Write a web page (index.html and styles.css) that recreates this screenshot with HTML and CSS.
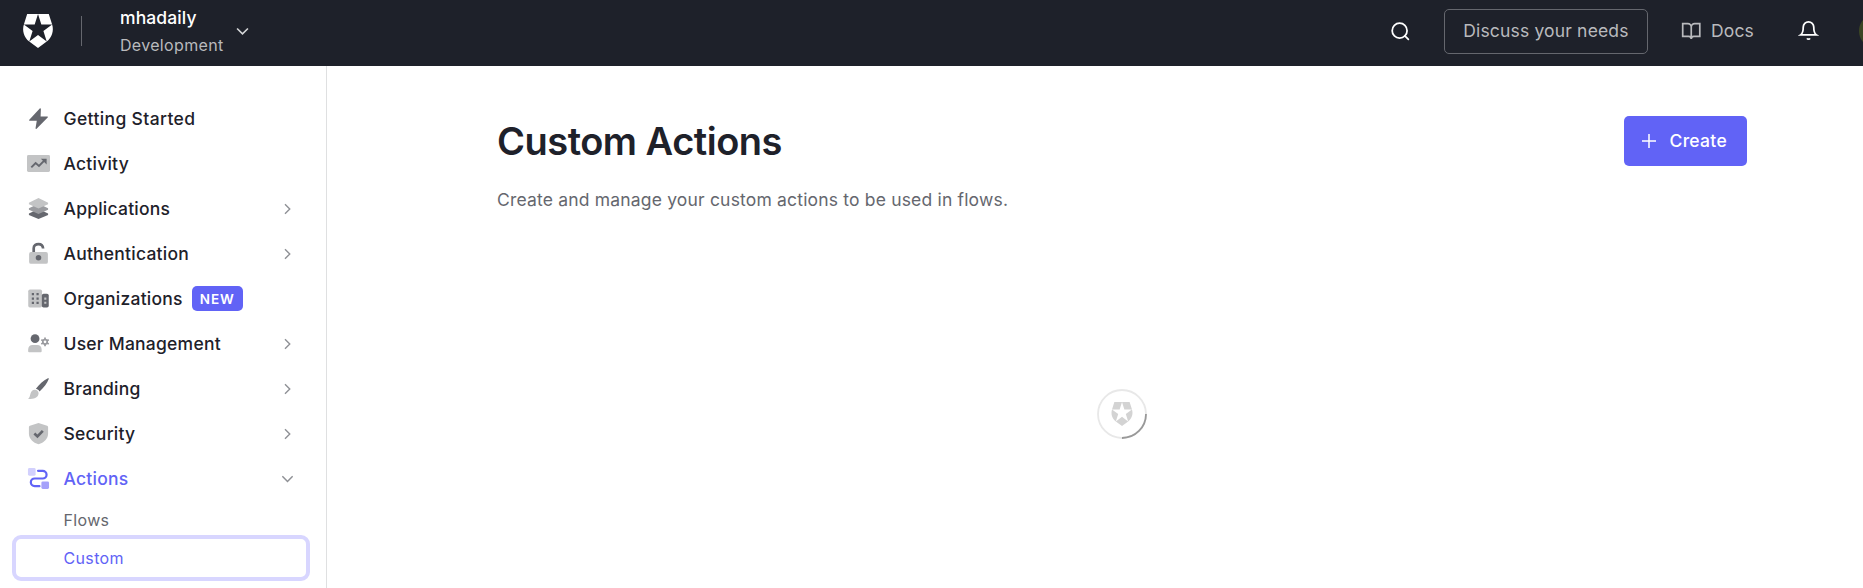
FILE: index.html
```
<!DOCTYPE html>
<html lang="en">
<head>
<meta charset="utf-8">
<title>Custom Actions</title>
<link rel="stylesheet" href="styles.css">
</head>
<body>
<svg class="defs" width="0" height="0" aria-hidden="true">
  <symbol id="shield" viewBox="0 0 24 24"><path d="M21.98 7.448L19.62 0H4.347L2.02 7.448c-1.352 4.312.03 9.206 3.815 12.015L12.007 24l6.157-4.552c3.755-2.81 5.182-7.688 3.815-12.015l-6.16 4.58 2.343 7.45-6.157-4.597-6.158 4.58 2.358-7.433-6.188-4.55 7.63-.045L12.008 0l2.356 7.404 7.615.044z"/></symbol>
  <symbol id="chevron" viewBox="0 0 24 24"><path d="M8 2.500l9.500 9.500L8 21.500"/></symbol>
</svg>
<header class="topbar">
  <svg class="logo"><use href="#shield"/></svg>
  <span class="divider"></span>
  <div class="tenant">
    <div class="tenant-name">mhadaily</div>
    <div class="tenant-env">Development</div>
  </div>
  <svg class="tenant-chevron" viewBox="0 0 12 8"><path d="M1 1.200l5 5 5-5"/></svg>
  <div class="tools">
    <svg class="search" viewBox="0 0 24 24"><circle cx="11" cy="11" r="8.500"/><path d="M21 21l-4-4"/></svg>
    <a class="discuss">Discuss your needs</a>
    <a class="docs"><svg viewBox="0 0 24 24"><path d="M2 3h6a4 4 0 0 1 4 4v14a3 3 0 0 0-3-3H2zM22 3h-6a4 4 0 0 0-4 4v14a3 3 0 0 1 3-3h7z"/></svg><span>Docs</span></a>
    <svg class="bell" viewBox="0 0 24 24"><path d="M18 8A6 6 0 0 0 6 8c0 7-3 9-3 9h18s-3-2-3-9"/><path d="M13.730 21a2 2 0 0 1-3.460 0"/></svg>
    <span class="avatar"></span>
  </div>
</header>
<div class="layout">
  <nav class="sidebar">
    <a class="item"><svg class="icon" viewBox="0 0 24 24"><path class="dark" d="M13.300 1.500L2.400 13.300c-.4.500-.1 1.100.5 1.100h7.300l-1.300 7.800c-.1.700.7 1 1.100.6L21.600 11c.4-.5.1-1.100-.5-1.100h-6.900l.3-7.800c0-.8-.8-1.100-1.200-.6z"/></svg><span>Getting Started</span></a>
    <a class="item"><svg class="icon" viewBox="0 0 24 24"><rect class="light" x="0" y="3.200" width="24" height="17.600" rx="1.500"/><path class="dark-line" d="M4.500 16l4.500-4.500 3.500 3 5.500-5.500"/><path class="dark" d="M14.500 7h6v6z"/></svg><span>Activity</span></a>
    <a class="item"><svg class="icon" viewBox="0 0 24 24"><path class="dark" d="M12 12.500l10 4.700v1.600L12 23 2 18.800v-1.600z"/><path class="mid" d="M12 7l10 4.700v1.600l-10 4.400-10-4.400v-1.600z"/><path class="light" d="M12 1l10 4.900v1.600L12 12 2 7.500V5.900z"/></svg><span>Applications</span><svg class="chev"><use href="#chevron"/></svg></a>
    <a class="item"><svg class="icon" viewBox="0 0 24 24"><path class="lock-line" d="M7 12V6.500C7 3.500 9.200 2.300 12 2.300s4.600 1.300 4.800 4.500"/><rect class="light" x="2.200" y="10.500" width="19.600" height="12.300" rx="2"/><circle class="dark" cx="12" cy="16.500" r="2.900"/></svg><span>Authentication</span><svg class="chev"><use href="#chevron"/></svg></a>
    <a class="item"><svg class="icon" viewBox="0 0 24 24"><rect class="light" x="1.300" y="2.700" width="14.400" height="18.600" rx="1.800"/><rect class="dark" x="15.500" y="7" width="7.200" height="14.300" rx="1.800"/><path class="dark" d="M5 6.300h2.300v2.300H5zm4.900 0h2.300v2.300H9.900zM5 10.900h2.300v2.300H5zm4.900 0h2.300v2.300H9.900zM5 15.500h2.300v2.300H5zm4.900 0h2.300v2.300H9.900z"/><path class="light" d="M18 11h2.200v2.200H18zm0 4.300h2.200v2.200H18z"/></svg><span>Organizations</span><b class="badge">NEW</b></a>
    <a class="item"><svg class="icon" viewBox="0 0 24 24"><circle class="dark" cx="8.400" cy="7" r="4.600"/><path class="light" d="M1.200 18.500c0-3 1.800-5 4.500-5h5.100c2.700 0 4.500 2 4.500 5v1.500c0 .6-.4 1-1 1H2.200c-.6 0-1-.4-1-1z"/><circle class="gear" cx="18.800" cy="10.300" r="2.300"/><path class="gear-teeth" d="M18.800 5.800v2.200m0 4.600v2.200m-3.900-6.750l1.900 1.100m4 2.300l1.900 1.100m-7.800 0l1.900-1.100m4-2.300l1.900-1.100"/></svg><span>User Management</span><svg class="chev"><use href="#chevron"/></svg></a>
    <a class="item"><svg class="icon" viewBox="0 0 24 24"><path class="dark" d="M9.300 12.200C12.500 8 17 3.500 21.800 1.300c.8-.3 1.200.2.900.9-1.700 4.700-5.300 9.300-9.600 12.900-.7-1.500-2-2.500-3.800-2.900z"/><path class="light" d="M8.300 13.400c2 .1 3.700 1.600 3.800 3.400 0 4.200-4.200 6.900-11 6 1.900-1.500 1.900-3.300 2.600-5.600.7-2.400 2.300-3.900 4.600-3.800z"/></svg><span>Branding</span><svg class="chev"><use href="#chevron"/></svg></a>
    <a class="item"><svg class="icon" viewBox="0 0 24 24"><path class="light" d="M12 1l9 2.900c.6.200 1 .6 1 1.300V12c0 5.500-4.200 9.500-10 11.300C6.200 21.500 2 17.500 2 12V5.200c0-.7.4-1.100 1-1.300z"/><path class="check" d="M7.700 12l3.200 3 5.600-5.700"/></svg><span>Security</span><svg class="chev"><use href="#chevron"/></svg></a>
    <a class="item active"><svg class="icon" viewBox="0 0 24 24"><rect class="tint" x="1" y="1" width="8" height="8" rx="1.500"/><rect class="tint-strong" x="15" y="15" width="8" height="8" rx="1.500"/><path class="flow" d="M11.500 4h4.900a4 4 0 0 1 0 8H8a4 4 0 0 0 0 8h5"/></svg><span>Actions</span><svg class="chev down"><use href="#chevron"/></svg></a>
    <a class="sub">Flows</a>
    <a class="sub selected">Custom</a>
  </nav>
  <main class="main">
    <div class="heading"><h1>Custom Actions</h1>
      <button class="create"><svg viewBox="0 0 14 14"><path d="M7 0v14M0 7h14"/></svg><span>Create</span></button></div>
    <p class="lead">Create and manage your custom actions to be used in flows.</p>
    <div class="loader"><svg class="ring" viewBox="0 0 50 50"><circle cx="25" cy="25" r="24"/><path d="M49 25a24 24 0 0 1-24 24"/></svg><svg class="loader-logo"><use href="#shield"/></svg></div>
  </main>
</div>
</body>
</html>
```
FILE: styles.css
```
* { box-sizing: border-box; }
body { margin: 0; height: 588px; overflow: hidden; background: #fff; color: #1e212a; font-family: Inter, "Liberation Sans", sans-serif; display: flex; flex-direction: column; }
.defs { position: absolute; }
svg { display: block; flex: none; fill: none; }
.topbar { height: 66px; flex: none; background: #1e212a; display: flex; align-items: center; padding-left: 21.400px; }
.logo { width: 34px; height: 34px; fill: #fff; margin-bottom: 4px; }
.divider { width: 1px; height: 30px; background: #65676e; margin: 0 38px 4px 25.600px; }
.tenant { padding-bottom: 4px; white-space: nowrap; }
.tenant-name { font-size: 17.500px; line-height: 27px; font-weight: 450; letter-spacing: .1px; color: #fff; }
.tenant-env { font-size: 16px; line-height: 28px; letter-spacing: .33px; color: #b9babd; }
.tenant-chevron { width: 13px; height: 9px; margin: 0 0 4px 12.500px; stroke: #d5d6d8; stroke-width: 1.500; }
.tools { margin-left: auto; height: 66px; display: flex; align-items: center; padding-bottom: 4px; color: #b9babd; font-size: 17.500px; letter-spacing: .17px; white-space: nowrap; }
.search { width: 21px; height: 21px; stroke: #fff; stroke-width: 2; stroke-linecap: round; margin-right: 32.500px; }
.discuss { width: 204px; height: 45px; border: 1px solid #65676e; border-radius: 5px; display: flex; align-items: center; justify-content: center; padding-bottom: 1px; margin-right: 33px; }
.docs { display: flex; align-items: center; gap: 9.500px; padding-bottom: 1px; }
.docs svg { width: 20.500px; height: 20.500px; margin-top: 1px; stroke: currentColor; stroke-width: 2; }
.bell { width: 21px; height: 21px; stroke: #fff; stroke-width: 2; margin: 0 40px 1px 44px; }
.avatar { width: 4px; height: 30px; background: radial-gradient(circle at 17px 15px, #3b4524 16.500px, transparent 17.500px); }
.layout { flex: 1; display: flex; min-height: 0; }
.sidebar { width: 327px; flex: none; border-right: 1px solid #dfe0e1; padding: 30px 12px 0; }
.item { height: 45px; display: flex; align-items: center; padding: 0 21px 0 15px; font-size: 17.500px; font-weight: 450; letter-spacing: .23px; white-space: nowrap; }
.item:first-child { letter-spacing: .36px; }
.icon { width: 23px; height: 23px; margin-right: 13.500px; }
.dark { fill: #65676e; }
.mid { fill: #9a9b9f; }
.light { fill: #c3c4c5; }
.dark-line { stroke: #65676e; stroke-width: 2; }
.lock-line, .check { stroke: #65676e; stroke-width: 2.800; }
.gear { stroke: #9a9b9f; stroke-width: 1.800; }
.gear-teeth { stroke: #9a9b9f; stroke-width: 1.800; }
.tint { fill: #d2d0fd; }
.tint-strong { fill: #a5a1fa; }
.flow { stroke: #6163f6; stroke-width: 2.300; stroke-linecap: round; }
.chev { width: 12px; height: 12px; margin-left: auto; stroke: #8e9095; stroke-width: 2.800; }
.down { width: 13px; height: 13px; margin-right: -.500px; transform: rotate(90deg); }
.active { color: #6163f6; }
.badge { width: 51px; height: 25px; border-radius: 5px; background: #6163f6; color: #fff; display: flex; align-items: center; justify-content: center; margin-left: 9px; font-size: 13.500px; font-weight: 600; letter-spacing: .8px; }
.sub { height: 38px; display: flex; align-items: center; padding-left: 51.500px; font-size: 16px; letter-spacing: .35px; color: #65676e; }
.selected { height: 46px; margin: -4px 4px 0 0; border: 4px solid #d8d6ff; border-radius: 9px; padding-left: 47.500px; color: #6163f6; }
.main { flex: 1; padding: 50px 116px 0 170px; }
.heading { height: 50px; display: flex; align-items: center; justify-content: space-between; }
h1 { margin: 0; font-size: 38px; line-height: 50px; font-weight: 600; letter-spacing: -.5px; }
.create { width: 123px; height: 50px; border: 0; border-radius: 5px; background: #6163f6; color: #fff; font: 500 17.500px Inter, sans-serif; letter-spacing: .3px; display: flex; align-items: center; padding: 0 0 1px 18px; gap: 13.500px; }
.create svg { width: 14px; height: 14px; stroke: #fff; stroke-width: 1.500; }
.lead { margin: 20px 0 0; font-size: 17.500px; line-height: 28px; letter-spacing: .18px; color: #65676e; }
.loader { width: 50px; height: 50px; margin: 175px auto 0; display: grid; place-items: center; }
.loader > svg { grid-area: 1 / 1; }
.ring { width: 50px; height: 50px; stroke-width: 1.800; }
.ring circle { stroke: #e8e8e8; }
.ring path { stroke: #999; }
.loader-logo { width: 24px; height: 24px; fill: #d3d3d3; }
```
